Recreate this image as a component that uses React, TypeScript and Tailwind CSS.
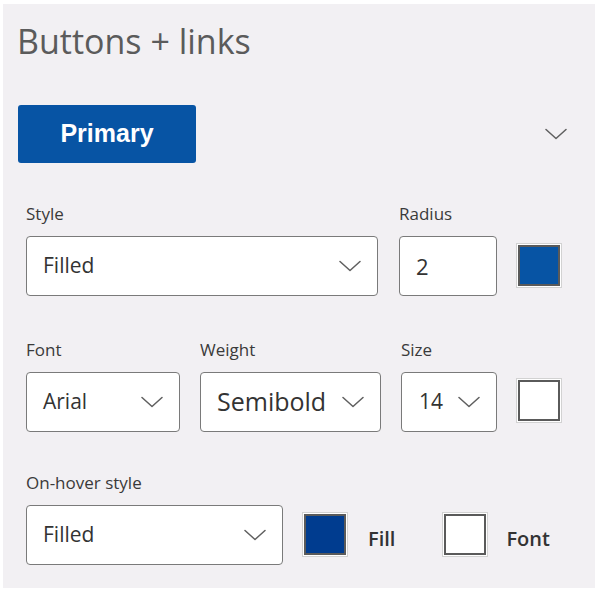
import React from "react";

function Chevron({ className = "" }: { className?: string }) {
  return (
    <svg width="22" height="12" viewBox="0 0 22 12" className={className} fill="none">
      <path d="M1 1.5 L11 10.5 L21 1.5" stroke="#5f5f5f" strokeWidth="1.5" strokeLinecap="round" strokeLinejoin="round" />
    </svg>
  );
}

function Swatch({ color }: { color: string }) {
  return (
    <div className="w-[46px] h-[45px] border border-[#d2d2d2] bg-white p-[1px] shrink-0">
      <div className="w-full h-full border-2 border-[#5a5a5a]" style={{ backgroundColor: color }} />
    </div>
  );
}

function Select({ value, width, textClass = "text-[21px]" }: { value: string; width: string; textClass?: string }) {
  return (
    <div className={`${width} h-[60px] bg-white border border-[#7a7a7a] rounded-[4px] flex items-center justify-between pl-[16px] pr-[16px] shrink-0`}>
      <span className={`${textClass} text-[#333]`}>{value}</span>
      <Chevron />
    </div>
  );
}

function Label({ children }: { children: React.ReactNode }) {
  return <div className="text-[17px] leading-[24px] text-[#3a3a3a] mb-[10px]">{children}</div>;
}

export default function App() {
  return (
    <div className="bg-white w-[599px] h-[592px] pt-[4px] pl-[3px]" style={{ fontFamily: '"Open Sans", "Noto Sans", sans-serif' }}>
      <div className="w-[592px] h-[584px] bg-[#f2f0f3] flex flex-col">
        {/* Header */}
        <h1 className="text-[34px] leading-[44px] text-[#5b5b5b] ml-[14px] mt-[15px]">Buttons + links</h1>

        <div className="flex items-center justify-between mt-[42px] ml-[15px] mr-[28px]">
          <button
            className="w-[178px] h-[58px] bg-[#0754a4] rounded-[3px] text-white text-[25px] font-bold"
            style={{ fontFamily: '"Liberation Sans", Arial, sans-serif' }}
          >
            Primary
          </button>
          <Chevron />
        </div>

        {/* Style / Radius */}
        <div className="flex items-end mt-[39px] ml-[23px]">
          <div>
            <Label>Style</Label>
            <Select value="Filled" width="w-[352px]" />
          </div>
          <div className="ml-[21px]">
            <Label>Radius</Label>
            <div className="w-[98px] h-[60px] bg-white border border-[#7a7a7a] rounded-[4px] flex items-center pl-[16px]">
              <span className="text-[22px] text-[#333]">2</span>
            </div>
          </div>
          <div className="ml-[19px] mb-[8px]">
            <Swatch color="#0754a4" />
          </div>
        </div>

        {/* Font / Weight / Size */}
        <div className="flex items-end mt-[42px] ml-[23px]">
          <div>
            <Label>Font</Label>
            <Select value="Arial" width="w-[154px]" />
          </div>
          <div className="ml-[20px]">
            <Label>Weight</Label>
            <Select value="Semibold" width="w-[181px]" textClass="text-[25px]" />
          </div>
          <div className="ml-[20px]">
            <Label>Size</Label>
            <div className="w-[96px] h-[60px] bg-white border border-[#7a7a7a] rounded-[4px] flex items-center justify-between pl-[17px] pr-[16px]">
              <span className="text-[21px] text-[#333]">14</span>
              <Chevron />
            </div>
          </div>
          <div className="ml-[19px] mb-[9px]">
            <Swatch color="#ffffff" />
          </div>
        </div>

        {/* On-hover style */}
        <div className="flex items-end mt-[39px] ml-[23px]">
          <div>
            <Label>On-hover style</Label>
            <Select value="Filled" width="w-[257px]" />
          </div>
          <div className="ml-[19px] mb-[8px] flex items-center">
            <Swatch color="#003c8f" />
            <span className="ml-[20px] text-[20px] font-semibold text-[#333] mt-[8px]">Fill</span>
            <div className="ml-[47px]">
              <Swatch color="#ffffff" />
            </div>
            <span className="ml-[18px] text-[20px] font-semibold text-[#333] mt-[8px]">Font</span>
          </div>
        </div>
      </div>
    </div>
  );
}
